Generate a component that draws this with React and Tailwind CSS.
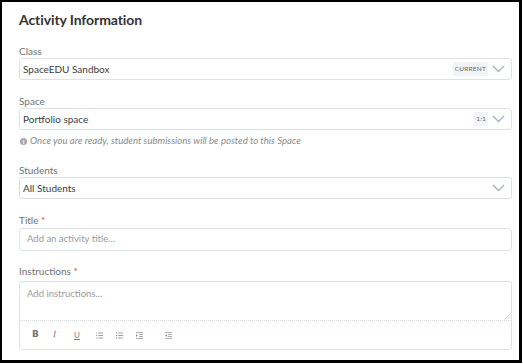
import React from "react";

function Chevron() {
  return (
    <svg width="13" height="8" viewBox="0 0 13 8" className="shrink-0">
      <polyline points="1,1 6.5,6.5 12,1" fill="none" stroke="#a9b2c2" strokeWidth="1.4" />
    </svg>
  );
}

function Label({ children, required }) {
  return (
    <div className="text-[10px] leading-[14px] text-[#707070]">
      {children}
      {required && <span className="text-[#e0423a]"> *</span>}
    </div>
  );
}

function Select({ value, badge }) {
  return (
    <div className="flex items-center h-[22px] border border-[#dde2ea] rounded-[3px] pl-[3px] pr-[6px] bg-white">
      <span className="flex-1 text-[10px] text-[#3c3c3c]">{value}</span>
      {badge && (
        <span className="bg-[#f1f3f6] text-[#666] text-[6.5px] leading-[14px] px-[2px] mr-[4px] tracking-[0.2px]">
          {badge}
        </span>
      )}
      <Chevron />
    </div>
  );
}

function ListIcon({ ordered }) {
  return (
    <svg width="7" height="7" viewBox="0 0 7 7">
      {[1, 3.5, 6].map((y) => (
        <g key={y}>
          {ordered ? (
            <rect x="0" y={y - 0.5} width="1.2" height="1" fill="#888" />
          ) : (
            <circle cx="0.6" cy={y} r="0.6" fill="#888" />
          )}
          <line x1="2.2" y1={y} x2="7" y2={y} stroke="#888" strokeWidth="0.8" />
        </g>
      ))}
    </svg>
  );
}

function IndentIcon({ out }) {
  return (
    <svg width="7" height="7" viewBox="0 0 7 7">
      <line x1="0" y1="0.5" x2="7" y2="0.5" stroke="#999" strokeWidth="0.8" />
      <line x1="3" y1="2.5" x2="7" y2="2.5" stroke="#999" strokeWidth="0.8" />
      <line x1="3" y1="4.5" x2="7" y2="4.5" stroke="#999" strokeWidth="0.8" />
      <line x1="0" y1="6.5" x2="7" y2="6.5" stroke="#999" strokeWidth="0.8" />
      {out ? (
        <polygon points="2,2 0,3.5 2,5" fill="#999" />
      ) : (
        <polygon points="0,2 2,3.5 0,5" fill="#999" />
      )}
    </svg>
  );
}

export default function App() {
  return (
    <div
      className="w-[522px] h-[363px] bg-white border-black border-l-2 border-t-2 border-r-[3px] border-b-[3px] pl-[17px] pr-[7px]"
      style={{ fontFamily: "Lato, 'Open Sans', sans-serif" }}
    >
      <h1 className="text-[14px] font-bold text-[#333] leading-[20px] mt-[8px] tracking-[-0.1px]">
        Activity Information
      </h1>

      <div className="mt-[14px]">
        <Label>Class</Label>
        <Select value="SpaceEDU Sandbox" badge="CURRENT" />
      </div>

      <div className="mt-[14px]">
        <Label>Space</Label>
        <Select value="Portfolio space" badge="1:1" />
        <div className="flex items-center gap-[3px] mt-[4px] text-[9.6px] leading-[14px] italic text-[#8a8a8a]">
          <span className="w-[7px] h-[7px] rounded-full bg-[#a8a8a8] text-white text-[6px] leading-[7px] not-italic font-bold flex items-center justify-center ml-[1px]">
            i
          </span>
          Once you are ready, student submissions will be posted to this Space
        </div>
      </div>

      <div className="mt-[15px]">
        <Label>Students</Label>
        <Select value="All Students" />
      </div>

      <div className="mt-[14px]">
        <Label required>Title</Label>
        <div className="mt-[1px] flex items-center h-[23px] border border-[#dde2ea] rounded-[3px] pl-[7px] text-[9.5px] text-[#9a9a9a]">
          Add an activity title...
        </div>
      </div>

      <div className="mt-[13px]">
        <Label required>Instructions</Label>
        <div className="mt-[3px] border border-[#dde2ea] rounded-[3px]">
          <div className="relative h-[39px] border-b border-dotted border-[#d5d9e0] pl-[7px] pt-[6px] text-[9.5px] leading-[12px] text-[#9a9a9a]">
            Add instructions...
            <svg width="5" height="5" viewBox="0 0 5 5" className="absolute right-[1px] bottom-[1px]">
              <line x1="0" y1="5" x2="5" y2="0" stroke="#bbb" strokeWidth="0.7" />
              <line x1="2.5" y1="5" x2="5" y2="2.5" stroke="#bbb" strokeWidth="0.7" />
            </svg>
          </div>
          <div className="flex items-center h-[28px] pl-[12px] text-[#777]">
            <span className="w-[21px] text-[9px] font-bold" style={{ fontFamily: "'DejaVu Sans', sans-serif" }}>B</span>
            <span className="w-[21px] text-[9px] italic" style={{ fontFamily: "'Liberation Serif', serif" }}>I</span>
            <span className="w-[22px] text-[8px] underline">U</span>
            <span className="w-[20px]"><ListIcon /></span>
            <span className="w-[20px]"><ListIcon ordered /></span>
            <span className="w-[29px]"><IndentIcon /></span>
            <span className="w-[20px]"><IndentIcon out /></span>
          </div>
        </div>
      </div>
    </div>
  );
}
